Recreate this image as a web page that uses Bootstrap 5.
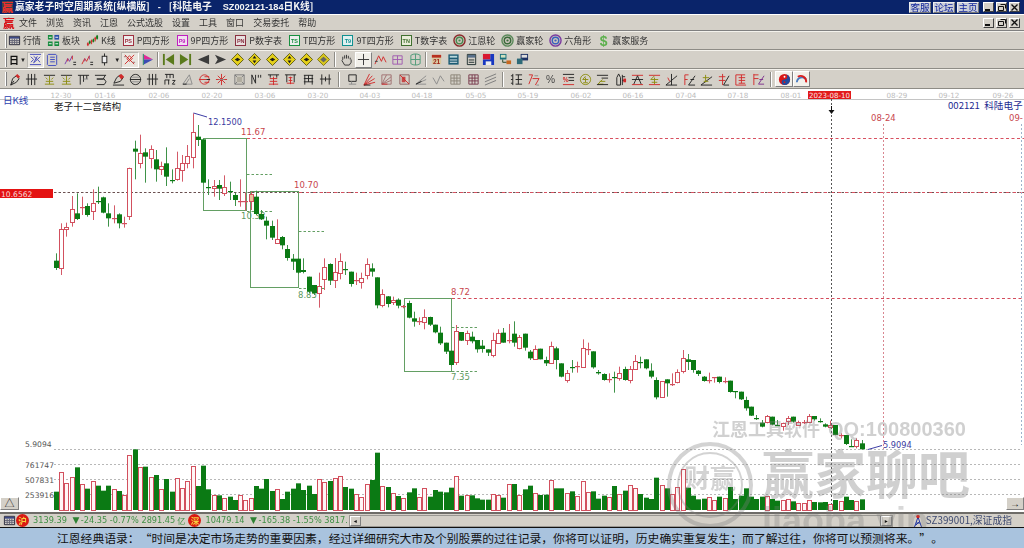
<!DOCTYPE html>
<html lang="zh-CN">
<head>
<meta charset="utf-8">
<title>赢家老子时空周期系统</title>
<link href="https://cdn.jsdelivr.net/npm/bootstrap@5.3.0/dist/css/bootstrap.min.css" rel="stylesheet">
<style>
html,body{margin:0;height:548px;overflow:hidden;background:#d4d0c8;}
body{font-family:"Liberation Sans","Noto Sans CJK SC",sans-serif;font-size:9px;line-height:1;color:#222;}
.shell{width:1024px;height:548px;filter:blur(.3px);}
.cjk{font-family:"Noto Sans CJK SC",sans-serif;}
.title-strip{height:14px;background:#0a246a;color:#f4f4f4;font-weight:700;font-size:9.8px;white-space:pre;}
.title-latin{font-family:"Liberation Sans",sans-serif;font-size:9.2px;}
.title-dash{padding:0 8px;}
.title-gap{margin-left:11px;}
.logo-ying{color:#d8161c;font-weight:900;font-family:"Noto Sans CJK SC",sans-serif;display:inline-block;width:11px;font-size:11.5px;text-align:center;line-height:12px;}
.logo-box{background:#444;color:#e83030;margin:0 2px;height:12px;}
.win-btn{width:11px;height:10px;background:#d4d0c8;border:1px solid;border-color:#fff #404040 #404040 #fff;display:inline-flex;align-items:center;justify-content:center;margin-left:2px;}
.web-btn{width:22px;height:11px;background:#c9cdd8;color:#0a1f9a;border:1px solid;border-color:#eee #777 #777 #eee;font-size:9.5px;font-weight:400;text-align:center;line-height:9px;margin-left:2px;}
.menu-strip{height:17px;border-top:1px solid #fff;border-bottom:1px solid #808080;gap:9px;font-size:9px;color:#333;padding-left:3px;}
.menu-strip .logo-ying{margin-right:-4px;}
.tool-row{height:19px;border-top:1px solid #f4f2ec;border-bottom:1px solid #8e8c86;padding-left:5px;}
.tool-tall{height:20px;}
.grip{width:2px;height:14px;background:#d4d0c8;border:1px solid;border-width:0 1px 0 0;border-color:#808080;box-shadow:inset 1px 0 0 #fff;margin-right:1px;flex:none;}
.grip-tight{margin-right:-1px;}
.row-items{gap:6px;color:#333;}
.text-tool{gap:2px;white-space:nowrap;}
.box-ic{width:11px;height:11px;margin:0 1px;border:1px solid;display:inline-flex;align-items:center;justify-content:center;font:700 5.5px "Liberation Sans",sans-serif;background:#eee;}
.ic{width:17.28px;height:16px;display:inline-flex;align-items:center;justify-content:center;flex:none;}
.ic svg{width:13px;height:13px;display:block;}
.ic-on{background:#e9e6df;border:1px solid;border-color:#b8b6b0 #fff #fff #b8b6b0;}
.ic-raised{background:#f2f0ea;border:1px solid;border-color:#fff #808080 #808080 #fff;}
.sep{display:inline-block;width:2px;height:15px;border-left:1px solid #8e8c86;border-right:1px solid #fff;flex:none;}
.drop{font-size:6px;color:#222;width:8px;flex:none;text-align:center;}
.day-lbl{width:11px;font-weight:700;font-size:10px;color:#111;text-align:right;flex:none;}
.main-wrap{height:438px;overflow:hidden;}
.chart-pane{height:423px;background:#fff;display:block;width:1024px;}
.chart-pane text{font-family:"DejaVu Sans",sans-serif;font-size:8px;}
.chart-pane text.zh{font-family:"Noto Sans CJK SC",sans-serif;font-size:9.6px;}
.status-strip{height:15px;border-top:2px solid #6e6c68;font-family:"DejaVu Sans",sans-serif;color:#3f8f45;font-size:8.2px;padding-left:3px;white-space:pre;}
.coin{width:13px;height:13px;border-radius:50%;background:#d91a12;color:#f6d040;font:700 8.5px/13px "Noto Sans CJK SC",sans-serif;text-align:center;display:inline-block;flex:none;}
.down-tri{color:#2f8233;font-size:9px;width:10px;text-align:center;flex:none;}
.yi-unit{margin:0 3px 0 2px;}
.h-scroll{width:544px;height:12px;margin-left:1px;background:#e2dfd8;border:1px solid #9a9893;flex:none;}
.scr-btn{width:11px;height:10px;background:#d4d0c8;border:1px solid;border-color:#fff #808080 #808080 #fff;color:#111;font-size:6px;line-height:8px;text-align:center;flex:none;}
.scr-thumb{flex:1;background:#d4d0c8;border-right:1px solid #808080;}
.idx-name{font-family:"Noto Sans CJK SC",sans-serif;color:#3e4a70;font-size:9.8px;margin:0 4px 0 3px;}
.mark-over{pointer-events:none;left:0;top:0;width:1024px;height:438px;}
.mark-over text{font-family:"Noto Sans CJK SC",sans-serif;font-weight:700;}
.mark-over .mark-latin{font-family:"Liberation Sans",sans-serif;}
.quote-strip{height:21px;border-top:1px solid #111;background:#a9c3de;color:#111;font:11.82px/20px "Noto Sans CJK SC",sans-serif;padding-left:57px;white-space:nowrap;}
.q-open,.q-close{display:inline-block;width:1em;}
.q-open{text-align:right;}
.q-close{text-align:left;}
.corner-btn{background:#d4d0c8;border:1px solid;border-color:#fff #808080 #808080 #fff;text-align:center;color:#222;height:13px;line-height:11px;font-size:10px;}
.corner-l{left:0;top:408px;width:19px;}
.corner-r{right:0;top:408px;width:18px;}
</style>
</head>
<body>
<div class="shell d-flex flex-column">

  <div class="title-strip d-flex align-items-center cjk">
    <span class="logo-ying logo-box">赢</span>
    <span>赢家老子时空周期系统[纵横版]<span class="title-latin title-dash">-</span>[科陆电子<span class="title-latin title-gap">SZ002121-184</span>日K线]</span>
    <span class="ms-auto d-flex align-items-center pe-1">
      <span class="web-btn">客服</span><span class="web-btn">论坛</span><span class="web-btn">主页</span>
      <span class="win-btn ms-1" data-win="min"></span><span class="win-btn" data-win="max"></span><span class="win-btn" data-win="close"></span>
    </span>
  </div>

  <div class="menu-strip d-flex align-items-center cjk">
    <span class="logo-ying">赢</span>
    <span>文件</span><span>浏览</span><span>资讯</span><span>江恩</span><span>公式选股</span><span>设置</span><span>工具</span><span>窗口</span><span>交易委托</span><span>帮助</span>
    <span class="ms-auto d-flex align-items-center pe-1">
      <span class="win-btn" data-win="min"></span><span class="win-btn" data-win="max"></span><span class="win-btn" data-win="close"></span>
    </span>
  </div>

  <div class="tool-row d-flex align-items-center cjk" id="row1"></div>
  <div class="tool-row d-flex align-items-center" id="row2"></div>
  <div class="tool-row tool-tall d-flex align-items-center" id="row3"></div>

  <div class="main-wrap position-relative">
    <svg class="chart-pane" id="chart" viewBox="0 89 1024 423" xmlns="http://www.w3.org/2000/svg"></svg>
    <div class="corner-btn position-absolute corner-l">△</div>
    <div class="corner-btn position-absolute corner-r">→</div>
    <div class="status-strip d-flex align-items-center">
      <span id="calIc"></span>
      <span class="coin">沪</span><span class="ms-1">3139.39</span><span class="down-tri ms-1">▼</span><span>-24.35 -0.77% 2891.45</span><span class="cjk yi-unit">亿</span>
      <span class="coin">深</span><span class="ms-1">10479.14</span><span class="down-tri ms-1">▼</span><span>-165.38 -1.55% 3817.</span>
      <div class="h-scroll d-flex align-items-center"><span class="scr-btn">◂</span><span class="scr-thumb h-100"></span><span class="scr-btn">▸</span></div>
      <span class="ms-auto d-flex align-items-center pe-2"><svg width="10" height="14" viewBox="0 0 10 14"><path d="M5 3 1.5 13M5 3 8.5 13M3 9h4M2.500 11.500 7 7" stroke="#2438a0" fill="none"/><circle cx="5" cy="2.500" r="1.800" fill="#d8201c"/></svg><span class="idx-name">SZ399001,深证成指</span></span>
    </div>
    <svg class="mark-over position-absolute" viewBox="0 89 1024 438" xmlns="http://www.w3.org/2000/svg">
      <g fill="#7d7d7d" fill-opacity=".36">
        <text x="712" y="436" font-size="18">江恩工具软件</text>
        <text x="828" y="436" font-size="20" class="mark-latin">QQ:100800360</text>
        <text x="762" y="494" font-size="52">赢家聊吧</text>
        <text x="762" y="533" font-size="36" class="mark-latin" fill-opacity=".3">liaoba.vip</text>
      </g>
      <g fill="none" stroke="#7d7d7d" stroke-opacity=".34">
        <circle cx="710" cy="485" r="41" stroke-width="4"/>
        <circle cx="710" cy="485" r="32" stroke-width="2"/>
      </g>
      <text x="684" y="488" font-size="26" fill="#7d7d7d" fill-opacity=".34">财赢</text>
    </svg>
  </div>

  <div class="quote-strip">江恩经典语录：<span class="q-open">“</span>时间是决定市场走势的重要因素，经过详细研究大市及个别股票的过往记录，你将可以证明，历史确实重复发生；而了解过往，你将可以预测将来。<span class="q-close">”</span>。</div>
</div>

<script>
/* ---------- icons ---------- */
const S=(c,d,w)=>`<path d="${d}" stroke="${c}" fill="none" stroke-width="${w||1}"/>`;
const F=(c,d)=>`<path d="${d}" fill="${c}"/>`;
const svg=(b)=>`<svg viewBox="0 0 14 14" xmlns="http://www.w3.org/2000/svg">${b}</svg>`;
const K='#222',R='#d22a2a',O='#8c8c10',G='#8a8a8a',DG='#0d7a1a';
const ICON={
 table:S('#223','M1.500 2.500h11v9h-11z')+F('#3d4a86','M2 3h10v2H2z')+S('#667','M2 7h10M2 9h10M4.500 5v6M7 5v6M9.500 5v6'),
 blocks:F('#148a3c','M1 1h5v5H1zM1 8h5v5H1zM8 8h5v5H8z')+F('#2a50a8','M8 1h5v5H8z')+S('#fff','M2 3.500h3M9 3.500h3M2 10.500h3M9 10.500h3'),
 kline:S(R,'M2 9v4M6 6v5M10 3v5')+S(DG,'M4 7v4M8 5v4M12 1v5')+F(R,'M1 10h2v2H1zM5 7h2v2H5zM9 4h2v2H9z')+F(DG,'M3 8h2v2H3zM7 6h2v2H7zM11 2h2v3h-2z'),
 wavebox:S('#3f44b8','M1 1.500h12M1 12.500h12M2 4l3 3-3 3M12 4 9 7l3 3M5 3.500l4 3.500-4 3.500M9 3.500 5 10.500'),
 doc:S('#3c4ac0','M2.500 1.500h8l1 1v10l-1 1h-8l-1-1v-10z')+S('#3c4ac0','M4.500 4.500h5M4.500 7h5M4.500 9.500h5'),
 waveS:S('#7b3da8','M1 12l3-6 2 3 3-6')+S(R,'M4 6v3M9 3v4')+S(K,'M10 10h3M10 12.500h3'),
 waveR:S(R,'M1 12l3-6 2 3 3-6')+S('#a03c7c','M4 6v3M9 3v4')+S(K,'M10 10h3M10 12.500h3'),
 candle:S(K,'M7 .5v13')+'<rect x="4.500" y="3.500" width="5" height="7" fill="#eee" stroke="#222"/>',
 candRed:S(R,'M2 2l10 10M12 2 2 12M4 6l3-3 3 3-3 3z')+S('#a06a6a','M1 4h3M10 10h3'),
 flag:F('#e02898','M3 1.500 13 7 3 7z')+F('#3c4ab4','M3 7h10L3 12.500z')+S('#17825f','M2.500 1v12'),
 toStart:F('#5a7a1c','M4 7l9-6v12z')+F('#5a7a1c','M1 1h2v12H1z'),
 toEnd:F('#5a7a1c','M10 7 1 1v12z')+F('#5a7a1c','M11 1h2v12h-2z'),
 prev:F('#3c3c3c','M1 7l12-5v10z'),
 next:F('#3c3c3c','M13 7 1 2l3 5-3 5z'),
 dia:F('#e4cf1a','M7 .5 13.500 7 7 13.500.5 7z')+S('#5c5a10','M7 .5 13.500 7 7 13.500.5 7z')+F('#1c1c1c','M4 7l3-2v4zM10 7 7 5v4z'),
 diaV:F('#e4cf1a','M7 .5 13.500 7 7 13.500.5 7z')+S('#5c5a10','M7 .5 13.500 7 7 13.500.5 7z')+F('#1c1c1c','M7 3l2 3H5zM7 11 5 8h4z'),
 diaA:F('#d7c61e','M7 .5 13.500 7 7 13.500.5 7z')+S('#7c7414','M7 .5 13.500 7 7 13.500.5 7z')+F('#666','M3.500 7 7 4l3.500 3L7 10z'),
 hand:S('#333','M3 7v-3M5 6V2.500M7 6V2M9 6V3M11 7V5M3 7l-1 1 3 5h5l2-3V7'),
 plus:S('#333','M7 1v12M1 7h12'),
 wave:S(R,'M1 12 5 3l3 6 2-5 3 6')+S('#344','M1 9h3'),
 gift:S('#a05ab0','M2 3h10v9H2zM7 3v9M2 7h10'),
 globe:S('#4f9a78','M2 2.500c3-2 7-2 10 0v9c-3 2-7 2-10 0zM7 1v12M2 7h10'),
 cal:F('#d8c8a0','M2 2h10v10H2z')+F('#b83020','M2 2h10v3H2z')+`<text x="7" y="11.500" text-anchor="middle" font-size="7" font-weight="700" font-family="Liberation Sans" fill="#a02418">21</text>`,
 calc:F('#1c5c74','M1.500 1.500h11v11h-11z')+F('#b8d8dc','M3 3h8v2H3z')+S('#e8eef0','M3 7.500h8M3 10h8',1),
 note:S('#1c2c2c','M2.500 1.500h9v11h-9z')+F('#58708a','M3 2h8v3H3z')+S('#1c2c2c','M4 7.500h6M4 10h6'),
 save:F('#d81830','M1 1h8v6H1z')+F('#1838c0','M9 1h4v12H1V7h8z')+F('#eee','M4 9h6v4H4z'),
 net:F('#18707c','M1 1h7v6H1z')+F('#d0e0c0','M2 2h5v3H2z')+F('#c86820','M8 8h5v4H8z')+S('#204020','M4 7v3h4'),
 ptr:F('#1c3064','M5 1h8v7H5z')+F('#2e6a78','M1 6h6v6H1z')+F('#ddd','M6 2h6v3H6z'),
 pen:S(K,'M3 13 5 6l4-3 3 3-3 4z')+F(R,'M8 3l2-2 3 3-2 2z')+S(K,'M3 13 6.500 8.500'),
 bars3:S(K,'M3.500 1v12M7 1v12M10.500 1v12M1 6.500h12'),
 oliveT:S(K,'M1 2.500h12')+S(O,'M3 5l2 2M11 5 9 7M7 3v9M3 9h8M2 12h10'),
 combT:S(K,'M1 2.500h12M3.500 2.500v10M7 2.500v7M10.500 2.500v4')+S(G,'M7 6.500h5'),
 bow:S(K,'M1 2.500h12M12 2.500 10 6.500H3M3 6.500h8l2 3-2 3H3'),
 penBase:S(K,'M2 11 5 5l4-3 3 3-3 4z')+F(R,'M7 3l3-2 3 3-3 3z')+S(K,'M1 13h12'),
 circLine:S(K,'M7 1.500a5.500 5.500 0 1 0 .01 0z')+S(K,'M1 7h12','1')+S(G,'M3 4.500h8M3 9.500h8'),
 n2:S(K,'M1 1.500h9M3 1.500v4M6.500 1.500v4M10 1.500v4M1 7.500h5M1 7.500v5M5 7.500v5')+S(K,'M9 8h3l-3 4h3'),
 triPen:S(G,'M2 12 9 2l3 10zM5 12l4-6')+S(K,'M2 12h4'),
 rCirc:S(R,'M7 2a5 5 0 1 0 .01 0zM1 7h8M7 4h5M7 10h5')+S(K,'M9 7h4'),
 rStar:S(R,'M7 1v12M1 7h12M3 3l8 8M11 3l-8 8')+S(G,'M4 7h6'),
 grayBox:S('#787878','M2 2h10v10H2zM2 2l10 10M12 2 2 12')+F('#b0aca0','M4 4h6v6H4z'),
 nLines:S(K,'M2 12V2l4 9V2M9 2v3M11.500 2v3'),
 rComb:S(K,'M1 2h12M3.500 2v3M10.500 2v3')+S(R,'M7 4v9M3 6h8M3 9h8M2 12h10'),
 rComb2:S(K,'M1 2h12M3 2v8M11 2v8')+S(R,'M5 5h4M5 8h4M3 11h8M7 4v8'),
 grid:S(K,'M2 2.500h10M2 6h10M2 9.500h10M3 2.500v10M7 2.500v7M11 2.500v10'),
 hArrow:S(K,'M3 1.500v11M11 1.500v11M1 6.500h12M7 4v5'),
 sqLines:S(K,'M3 2h8M3 9h8M3 2v7M11 2v7')+S(G,'M3 12h8M6 9v3'),
 fan:S(R,'M1 13 7 1M1 13 10 3M1 13 12.500 6M1 13l12-3')+S(K,'M1 13h7'),
 fanBox:S('#a07070','M2 2h10v10H2zM2 12 7 2M2 12 12 4M2 12l10-4')+S(R,'M2 12h6'),
 redBox:S('#8a6060','M2 2h10v10H2z')+F('#c44848','M4 4h4v6H4z')+S(R,'M2 2 12 12'),
 angle:S(G,'M1 12 12 3M1 12 12 7M1 12h11')+S(K,'M1 12l6-3'),
 vLines:S(G,'M1 5l4 7 4-9 4 6'),
 gridGr:S('#8a8478','M2 2h10v10H2zM2 5.500h10M2 8.500h10M5.500 2v10M8.500 2v10'),
 gridRd:S('#76384c','M2 2h10v10H2zM2 5.500h10M2 8.500h10M5.500 2v10M8.500 2v10'),
 diags:S('#7a7a7a','M1 6 13 1M1 9.500 13 4.500M1 13 13 8'),
 ebar:S(K,'M3 1v12M1 3h2M1 7h2M1 11h2M6 2h7M6 7h7M6 12h7M9 2v10'),
 redPct:S(R,'M2 2h4M6 2 2 12M6 6h7l-4 7')+S(G,'M8 3h4M10 13h3'),
 pct:`<text x="7" y="11" text-anchor="middle" font-size="11" font-family="Liberation Sans" fill="#454545">%</text>`,
 rPct:S(K,'M1 1.500h12M7 5h6M7 8h6')+`<text x="4" y="9.500" text-anchor="middle" font-size="7" font-weight="700" font-family="Liberation Sans" fill="${R}">%</text>`+S(R,'M1 12.500h12'),
 coinO:S(O,'M7 1.500a5.500 5.500 0 1 0 .01 0z')+S(O,'M7 3.500 4 7h6M7 5v5M4.500 10.500h5'),
 oliveL:S(K,'M1 2.500h12M6 5.500h7')+S(O,'M7 7 2 12h6M4 9h6')+S(K,'M1 12.500h12'),
 penB:S(K,'M3 13V5l2-4 2 4v8zM9 2v11M9 4h3M9 8h3')+F(R,'M10 6h3v4h-3z'),
 rLines:S(R,'M1 2.500h12M1 12.500h12')+S(K,'M1 7h12M3 12 7 3l4 9'),
 rOlive:S(R,'M1 2.500h12M1 12.500h12')+S(O,'M7 3 3 7h8M7 5v7M4 10h6'),
 bDiag:S(K,'M7 1v12M1 13 13 3M1 13h12')+S(R,'M3 5l2 4'),
 rF:S(R,'M2 2v11M2 2h4M2 7h3')+S(K,'M6 13 13 3M6 13h7M8 7h4'),
 oDiag:S(K,'M1 13 13 4M1 13h12')+S(O,'M6 2v8M3 5h7M4 9h5'),
 rDiag:S(R,'M6 1v12M2 4h7M2 8h7')+S(K,'M13 3 7 13h6'),
 rGrid:S(R,'M2 2h10M2 2v11M2 13h11M5 5h7M5 8h7M5 11h7M8 2v9'),
 rDiag2:S(R,'M2 1v12M2 2h5M2 6h5')+S('#7c2e8c','M13 3 7 12h6M8 7h4'),
 yy:'<circle cx="7" cy="7" r="6" fill="#d81818"/>'+F('#1f4aa0','M7 1a6 6 0 0 1 0 12 3 3 0 0 1 0-6 3 3 0 0 0 0-6z')+'<circle cx="7" cy="4" r="1" fill="#fff"/><circle cx="7" cy="10" r="1" fill="#d81818"/>',
 arc:S('#4a7cc0','M2 10a5.500 5.500 0 0 1 10-3',2)+S('#d82020','M3 4a6 6 0 0 1 9 6',2)
};
const ic=(n,cl)=>`<span class="ic ${cl||''}">${svg(ICON[n])}</span>`;
const sep=(w)=>`<span class="d-inline-flex justify-content-center flex-none" style="width:${w}px"><span class="sep"></span></span>`;
const box=(t,c,bg)=>`<span class="box-ic" style="border-color:${c};color:${c};background:${bg||'#eee'}">${t}</span>`;
const wheel=(a,b)=>`<svg width="13" height="13" viewBox="0 0 14 14"><circle cx="7" cy="7" r="6" fill="#c8c4ba" stroke="${a}" stroke-width="1.500"/><circle cx="7" cy="7" r="3.500" fill="none" stroke="${b}" stroke-width="1.500"/><circle cx="7" cy="7" r="1.200" fill="${b}"/></svg>`;
const tt=(i,t)=>`<span class="text-tool d-inline-flex align-items-center">${i}<span>${t}</span></span>`;
const mini=n=>`<svg width="13" height="13" viewBox="0 0 14 14" style="display:block">${ICON[n]}</svg>`;

document.getElementById('row1').innerHTML=`<span class="grip"></span><span class="row-items d-flex align-items-center">`+[
 tt(mini('table'),'行情'),tt(mini('blocks'),'板块'),tt(mini('kline'),'K线'),
 tt(box('PS','#a03040'),'P四方形'),tt(box('P9','#c020c0','#f2e0f0'),'9P四方形'),tt(box('PN','#8a3040','#e8e0e0'),'P数字表'),
 tt(box('TS','#189040'),'T四方形'),tt(box('T9','#109090','#e0f0f0'),'9T四方形'),tt(box('TN','#407030','#e8ecd8'),'T数字表'),
 tt(wheel('#8a2a2a','#4a8a50'),'江恩轮'),tt(wheel('#5a8a5a','#3a6a3a'),'赢家轮'),tt(wheel('#7a3aa0','#3a60c0'),'六角形'),
 tt(`<svg width="13" height="13" viewBox="0 0 14 14"><text x="7" y="12.500" text-anchor="middle" font-size="15" font-weight="700" font-family="Liberation Sans" fill="#5cb04c">$</text></svg>`,'赢家服务')
].join('')+`</span>`;

document.getElementById('row2').innerHTML=`<span class="grip"></span><span class="day-lbl cjk">日</span><span class="drop">▼</span>`+
 ['wavebox','doc','waveS','waveR'].map((n,i)=>ic(n,i==0?'ic-on':'')).join('')+
 ic('candle')+`<span class="drop">▼</span>`+ic('candRed','ic-on')+ic('flag')+sep(4)+
 ['toStart','toEnd','prev','next','dia','diaV','dia','diaV','dia','diaA'].map(n=>ic(n)).join('')+sep(5)+
 ic('hand')+ic('plus','ic-raised')+ic('wave')+ic('gift')+ic('globe')+sep(4)+
 ['cal','calc','note','save','net','ptr'].map(n=>ic(n)).join('');

document.getElementById('row3').innerHTML=`<span class="grip grip-tight"></span>`+
 ['pen','bars3','oliveT','oliveT','combT','bow','penBase','circLine','bars3','n2','triPen','rCirc','rStar','grayBox','nLines','rComb','rComb2','grid','hArrow'].map(n=>ic(n)).join('')+sep(9.7)+
 ['sqLines','fan','fanBox','redBox','angle','vLines','gridGr','gridRd','diags'].map(n=>ic(n)).join('')+sep(8.7)+
 ['ebar','redPct','pct','rPct','coinO','oliveL','penB','rLines','rOlive','bDiag','rF','oDiag','rDiag','rGrid','rDiag2'].map(n=>ic(n)).join('')+sep(8.7)+
 ic('yy','ic-raised')+ic('arc','ic-raised');

document.getElementById('calIc').innerHTML=mini('table');

const winSvg={min:'<svg width="7" height="7"><path d="M0 6h5" stroke="#111" stroke-width="2"/></svg>',
 max:'<svg width="8" height="7"><path d="M2.500.5h5v4M.5 2.500h5v4h-5z" stroke="#111" fill="none"/></svg>',
 close:'<svg width="7" height="7"><path d="M.5.5l6 6M6.500.5l-6 6" stroke="#111" stroke-width="1.400"/></svg>'};
document.querySelectorAll('[data-win]').forEach(e=>e.innerHTML=winSvg[e.dataset.win]);

/* ---------- chart ---------- */
const parse=(s,o)=>s.trim().split(/\s+/).map(t=>[t[0]].concat(t.slice(1).split(',').map(n=>+n/3+o)));
const candles=[].concat(parse(`g482,504,460,510 r388,505,370,525 r380,385,368,410 r328,367,288,380 g340,357,280,360 r321,321,290,345 g318,345,310,350 r308,332,268,360 g303,303,260,312 g292,338,290,340 g340,355,310,380 r355,355,316,370 g343,370,340,385 r368,368,350,383 r203,346,203,360 g146,155,122,238 r160,190,104,205 g157,170,145,248 r148,176,136,205 g178,208,150,245 r197,206,185,225 g190,230,142,258 g240,240,208,250 r203,236,155,242 r190,211,165,245 r168,190,135,205 r96,170,40,205 g110,120,75,138 g118,248,118,250 g262,262,238,285 r257,262,240,290 g255,266,240,300 r261,280,226,288 g272,272,245,300 g285,300,278,318 r303,303,238,320 r303,303,278,332 o282,302,275,330 g290,342,272,345 g342,358,330,360 g362,377,350,418 g378,413,362,420 r416,428,358,432 g411,436,408,448 g447,474,435,482 g476,485,462,510 g476,518,476,522`,100),
 parse(`g120,126,85,130 g140,185,140,190 g165,190,165,195 r167,187,128,233 r111,147,85,180 g102,152,100,165 r125,148,84,174 r94,130,70,148 g117,117,95,135 g125,162,125,170 r150,150,128,165 r143,155,128,176 r103,136,85,148 g115,125,100,140 g142,226,142,235 r191,224,178,232 g199,222,198,232 r210,217,200,225 g209,227,205,235 r229,229,225,235 g219,263,212,265 g265,275,245,290 r272,272,262,285 r262,278,238,298 g261,284,260,288 g284,307,284,310 g308,340,290,345 g338,365,338,372 g362,405,362,408 r302,396,285,405 g306,332,306,333 r310,330,302,345 g320,334,305,340 g330,358,330,368 g347,357,330,368 g358,368,358,378 r331,377,308,382 r308,338,298,338 g308,338,294,338 r329,329,282,340 g311,338,274,350 r320,353,315,358 g311,353,311,362 g365,385,360,390 r356,385,346,388 g356,388,356,388 g390,400,380,408 r347,398,335,400 g355,390,350,418 g400,440,400,442 r428,450,420,458 g410,410,390,428 r408,408,395,428 r353,410,328,412 r358,358,338,375 g364,412,364,416 g426,430,420,434 g432,450,430,452 r447,447,430,458 g440,440,425,488 r428,442,410,452 g417,450,410,452 r417,450,408,460 r392,416,375,420 g396,396,380,415`,230),
 parse(`g88,115,88,118 g122,140,100,145 g150,202,142,208 r153,200,153,200 g148,160,148,200 r162,162,130,168 r127,157,118,160 r85,125,60,130 g88,96,72,120 g90,120,90,128 g122,132,120,138 g140,153,138,155 r150,150,128,160 r141,141,141,158 g140,156,140,160 r153,153,142,160 g152,186,152,188 g183,183,183,205 g185,208,185,210 g210,235,200,242 g230,257,230,258 g265,265,255,270 g278,290,270,292 r258,277,255,280 g260,284,260,286 g285,285,270,287 r280,290,278,302 r265,275,258,285 g260,275,260,278 r275,283,272,285 r277,277,270,282 r258,275,252,278 g258,268,258,272 g272,272,265,278 g283,290,280,292 r285,290,272,295 g285,315,285,316 r315,315,310,325 g315,342,315,345 g347,347,328,350 r330,347,325,355 g340,358,330,358`,330));

const vols=[].concat(parse(`g185 r125 r160 r140 g112 r163 g176 r153 g167 g182 g167 r176 g183 r196 r74 g58 r112 g110 r140 g135 r176 g147 g185 r145 r175 r153 r108 g168 g107 g178 r196 g196 r203 g200 g210 r196 r210 r203 g168 g176 g147 g183 r178 g207 g185 g176 g160 g180 g167 g192 r148 r156 g153 r145 r138 g171 g176 r193 r202 r162 g150 g68 r167 g171 r190 g198`,430),
 parse(`r160 g142 g130 r157 r130 g155 g135 g140 g142 g128 r93 g152 r151 g151 g160 g164 g164 r147 r151 g158 r118 g117 r150 g133 g122 r145 g150 g149 r105 g130 g130 r144 g139 r153 r108 r140 g139 g161 g152 r157 g123 r148 g137 r120 r129 g147`,445),
 parse(`g158 g162 g98 r120 g130 r147 r127 r72 g128 g152 g163 g161 r157 r165 g155 r160 g126 g162 g152 g130 g155 g162 g155 r154 g162 g167 r165 r163 g169 r175 r175 r164 g171 g172 g171 r178 g165 r168 g155 g165 r168 g163`,445));

const GC='#0b7a14',RC='#d2505e';
const X=i=>Math.round(55.7+i*5.268);
let o='';
const line=(x1,y1,x2,y2,c,d,w)=>`<line x1="${x1}" y1="${y1}" x2="${x2}" y2="${y2}" stroke="${c}" stroke-width="${w||1}"${d?` stroke-dasharray="${d}"`:''}/>`;
const text=(x,y,t,c,extra)=>`<text x="${x}" y="${y}" fill="${c}" ${extra||''}>${t}</text>`;

/* date axis */
const dates=[['12-30',61],['01-16',105],['02-06',159],['02-20',212],['03-06',265],['03-20',318],['04-03',370],['04-18',422],['05-05',476],['05-19',528],['06-02',581],['06-16',633],['07-04',686],['07-18',738],['08-01',791],['08-29',897],['09-12',949],['09-26',1003]];
dates.forEach(d=>o+=text(d[1],98,d[0],'#bcbcbc','text-anchor="middle" style="font-size:7.200px"'));
o+=line(0,99.500,1024,99.500,'#c4c4c4');
o+=`<rect x="808" y="91" width="43" height="8" fill="#e21a1a"/>`+text(829.500,98,'2023-08-10','#fbe9e9','text-anchor="middle" textLength="41" lengthAdjust="spacingAndGlyphs" style="font-size:7.200px"');
o+=text(3,103.500,'日K线','#2e3fb0','class="zh"');
o+=text(54,109.500,'老子十二宫结构','#222','class="zh"');
o+=text(948,108.500,'002121  科陆电子','#1e2c92','class="zh" xml:space="preserve"');
o+=text(871,121,'08-24','#c8454d','style="font-size:8.500px"')+text(1009,121,'09-','#c8454d','style="font-size:8.500px"');

/* horizontal guides */
[449.500,464.500,479.500,494.500].forEach(y=>o+=line(54,y,1021,y,'#b8b8b8','2 2'));
[['5.9094',447],['761747',468],['507831',483],['253916',498]].forEach(v=>o+=text(25,v[1],v[0],'#555','style="font-size:7.600px"'));
o+=line(54,192.500,1024,192.500,'#6a5050','2.500 2');
o+=line(247,138.500,1024,138.500,'#d85060','3 2.500');
o+=line(299,192.500,1024,192.500,'#d85060','3 4');
o+=line(452,298.500,1024,298.500,'#d44c5c','3 2.500');
/* verticals */
o+=line(883.500,124,883.500,449,'#d98690','2 2');
o+=line(1021.500,124,1021.500,445,'#9db3cc','2 2');
o+=line(831.500,99,831.500,511,'#555','2 2');
o+=`<path d="M828.500 110h6l-3 4z" fill="#111"/>`+line(831.500,106,831.500,110,'#111');

/* gann boxes */
const BOX='#639f63';
o+=`<rect x="203.500" y="138.500" width="43" height="72" fill="none" stroke="${BOX}"/>`;
o+=`<rect x="250.500" y="191.500" width="48" height="96" fill="none" stroke="${BOX}"/>`;
o+=`<rect x="404.500" y="298.500" width="47" height="73" fill="none" stroke="${BOX}"/>`;
[[247,174.500,272],[247,211.500,272],[299,231.500,324],[299,288.500,324],[452,327.500,477],[452,371.500,477]].forEach(a=>o+=line(a[0],a[1],a[2],a[1],BOX,'2.500 2'));
o+=text(241,135,'11.67','#c8454d','style="font-size:8.500px"')+text(294,188,'10.70','#c8454d','style="font-size:8.500px"')+text(451,295,'8.72','#c8454d','style="font-size:8.500px"');
o+=text(241,219,'10.38','#5f9a5f','style="font-size:8.500px"')+text(298,298,'8.85','#5f9a5f','style="font-size:8.500px"')+text(451,380,'7.35','#5f9a5f','style="font-size:8.500px"');

/* current-price tag */
o+=`<rect x="0" y="189" width="53" height="9" fill="#e41212"/>`+text(1,196.500,'10.6562','#f6dcdc','style="font-size:7.600px"');

/* volume */
vols.forEach((v,i)=>{const x=X(i),t=v[1];
 if(v[0]=='g')o+=`<rect x="${x-2}" y="${t}" width="5" height="${510-t}" fill="${GC}"/>`;
 else o+=`<rect x="${x-1.500}" y="${Math.round(t)+.5}" width="4" height="${510-Math.round(t)}" fill="#fff6f6" stroke="${RC}"/>`;});

/* candles */
candles.forEach((c,i)=>{const x=X(i);const [k,t,b,h,l]=c;
 const col=k=='g'?GC:RC;
 o+=line(x+.5,h,x+.5,l,k=='g'?'#3e9248':'#d45a68');
 if(t===b)o+=`<rect x="${x-2}" y="${Math.round(t)}" width="5" height="1.200" fill="${col}"/>`;
 else if(k=='g')o+=`<rect x="${x-2}" y="${t}" width="5" height="${b-t}" fill="${GC}"/>`;
 else o+=`<rect x="${x-1.500}" y="${Math.round(t)+.5}" width="4" height="${Math.max(1,Math.round(b-t))}" fill="${k=='o'?'#eec09a':'#fff'}" stroke="${RC}"/>`;});

/* extremes */
o+=`<path d="M193.500 113 207 117" stroke="#3e3ea6" fill="none"/>`+text(208,125,'12.1500','#3a3aa0','style="font-size:8.200px"');
o+=`<path d="M868 449.500 882 445.500" stroke="#3e3ea6" fill="none"/>`+text(883,447.500,'5.9094','#3a3aa0','style="font-size:8.200px"');

document.getElementById('chart').innerHTML=o;
</script>
<script src="https://cdn.jsdelivr.net/npm/bootstrap@5.3.0/dist/js/bootstrap.bundle.min.js"></script>
</body>
</html>
